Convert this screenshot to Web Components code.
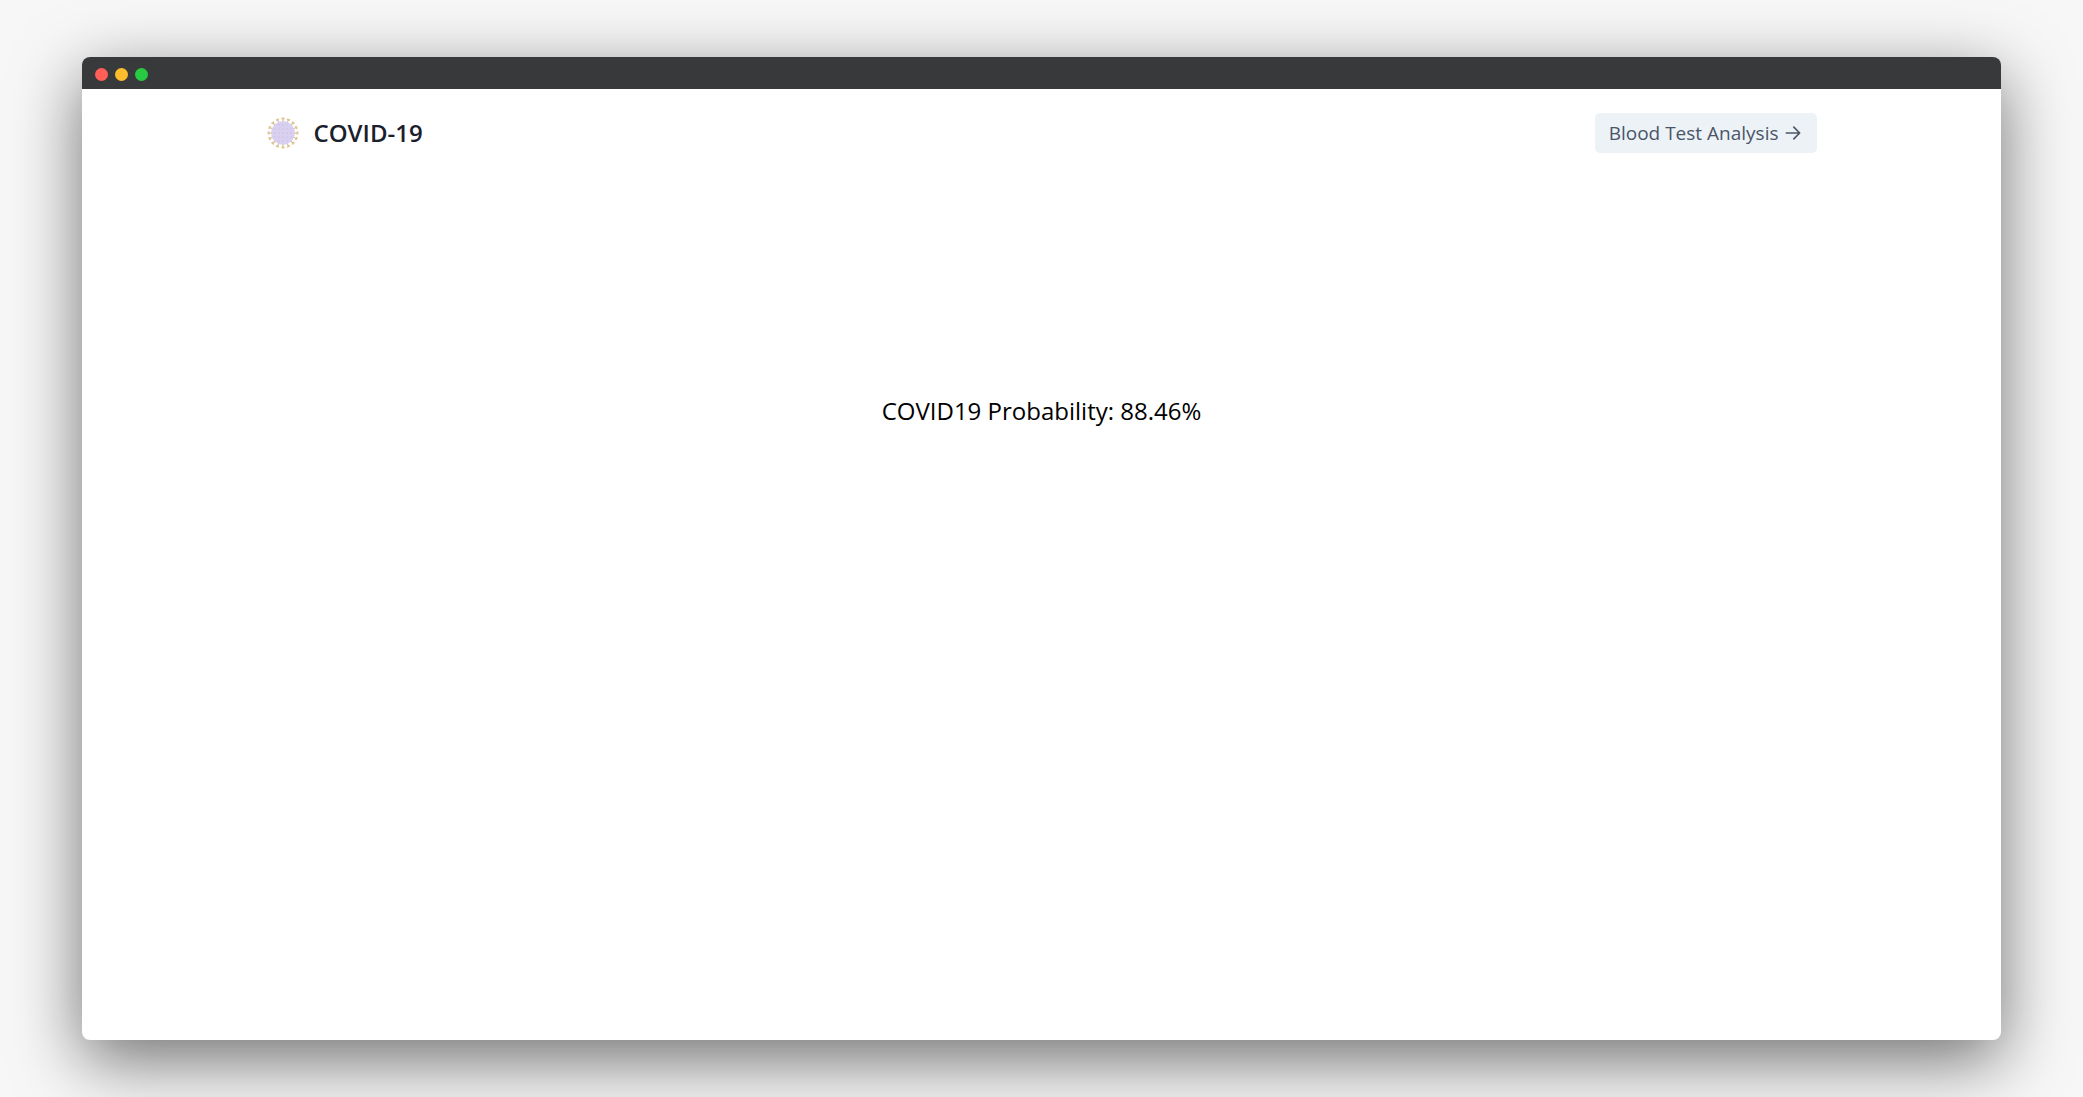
<!DOCTYPE html>
<html lang="en">
<head>
<meta charset="utf-8">
<title>COVID-19</title>
<style>
  html, body { height: 100%; }
  body { margin: 0; background: #f7f7f7; font-family: "Segoe UI", "Open Sans", "Noto Sans", sans-serif; color: #000; }
</style>
</head>
<body>
<app-window>
  <site-header>
    <virus-logo slot="logo"></virus-logo>
    <span slot="title">COVID-19</span>
    <arrow-link slot="action" href="#analysis">Blood Test Analysis</arrow-link>
  </site-header>
  <result-panel>COVID19 Probability: 88.46%</result-panel>
</app-window>
<script>
class BaseElement extends HTMLElement {
  constructor() {
    super();
    this.attachShadow({ mode: "open" }).innerHTML = this.render();
  }
}

customElements.define("app-window", class extends BaseElement {
  render() {
    return `<style>
      :host { display: flex; box-sizing: border-box; min-height: 100%; padding: 57px 82px; overflow: hidden; }
      .frame { flex: 1; display: flex; flex-direction: column; background: #fff; border-radius: 8px; box-shadow: 0 20px 68px rgba(0, 0, 0, .55); }
      .bar { display: flex; align-items: center; gap: 7px; height: 32px; padding: 2px 13px 0; box-sizing: border-box; background: #37393a; border-radius: 8px 8px 0 0; }
      i { width: 13px; height: 13px; border-radius: 50%; }
      .close { background: #ff5f57; }
      .min { background: #ffbd2e; }
      .max { background: #28ca42; }
      main { flex: 1; }
    </style>
    <div class="frame">
      <div class="bar"><i class="close"></i><i class="min"></i><i class="max"></i></div>
      <main><slot></slot></main>
    </div>`;
  }
});

customElements.define("site-header", class extends BaseElement {
  render() {
    return `<style>
      :host { display: block; }
      header { display: flex; align-items: center; justify-content: space-between; box-sizing: border-box; max-width: 1600px; margin: 0 auto; padding: 24px 25px; }
      .brand { display: flex; align-items: center; gap: 15px; color: #1a202c; font-size: 24px; font-weight: 600; line-height: 40px; }
    </style>
    <header>
      <div class="brand"><slot name="logo"></slot><slot name="title"></slot></div>
      <slot name="action"></slot>
    </header>`;
  }
});

customElements.define("virus-logo", class extends BaseElement {
  render() {
    let spikes = "", dots = "";
    for (let n = 0; n < 16; n++) {
      spikes += `<g transform="rotate(${n * 22.5} 16 16)"><path d="M16 5V2" stroke="#c4ad84" stroke-width="1"/><path d="M14.4 1.5h3.2" stroke="#dfc68e" stroke-width="1.8"/></g>`;
    }
    for (let y = 8; y <= 24; y += 4) {
      for (let x = 8; x <= 24; x += 4) {
        if (Math.hypot(x - 16, y - 16) < 10) dots += `<circle cx="${x}" cy="${y}" r=".7"/>`;
      }
    }
    return `<style>
      :host { display: block; width: 32px; height: 32px; }
      svg { display: block; }
    </style>
    <svg width="32" height="32" viewBox="0 0 32 32" fill="none" aria-hidden="true">
      ${spikes}<circle cx="16" cy="16" r="11.8" fill="#d9d0f0"/><g fill="#c8bee4">${dots}</g>
    </svg>`;
  }
});

customElements.define("arrow-link", class extends BaseElement {
  render() {
    return `<style>
      :host { display: block; }
      a { display: flex; align-items: center; gap: 4px; height: 40px; padding: 0 14px; box-sizing: border-box; border-radius: 5px; background: #edf2f7; color: #4a5568; font-size: 19px; line-height: 30px; text-decoration: none; }
      svg { display: block; }
    </style>
    <a href="${this.getAttribute("href") || "#"}"><span><slot></slot></span>
      <svg width="20" height="20" viewBox="0 0 24 24" fill="none" stroke="currentColor" stroke-width="2" stroke-linecap="round" stroke-linejoin="round" aria-hidden="true"><path d="M4 12h16M13 5l7 7-7 7"/></svg>
    </a>`;
  }
});

customElements.define("result-panel", class extends BaseElement {
  render() {
    return `<style>
      :host { display: block; padding: 216px 24px 0; text-align: center; font-size: 24px; line-height: 36px; }
      p { margin: 0; }
    </style>
    <p><slot></slot></p>`;
  }
});
</script>
</body>
</html>
